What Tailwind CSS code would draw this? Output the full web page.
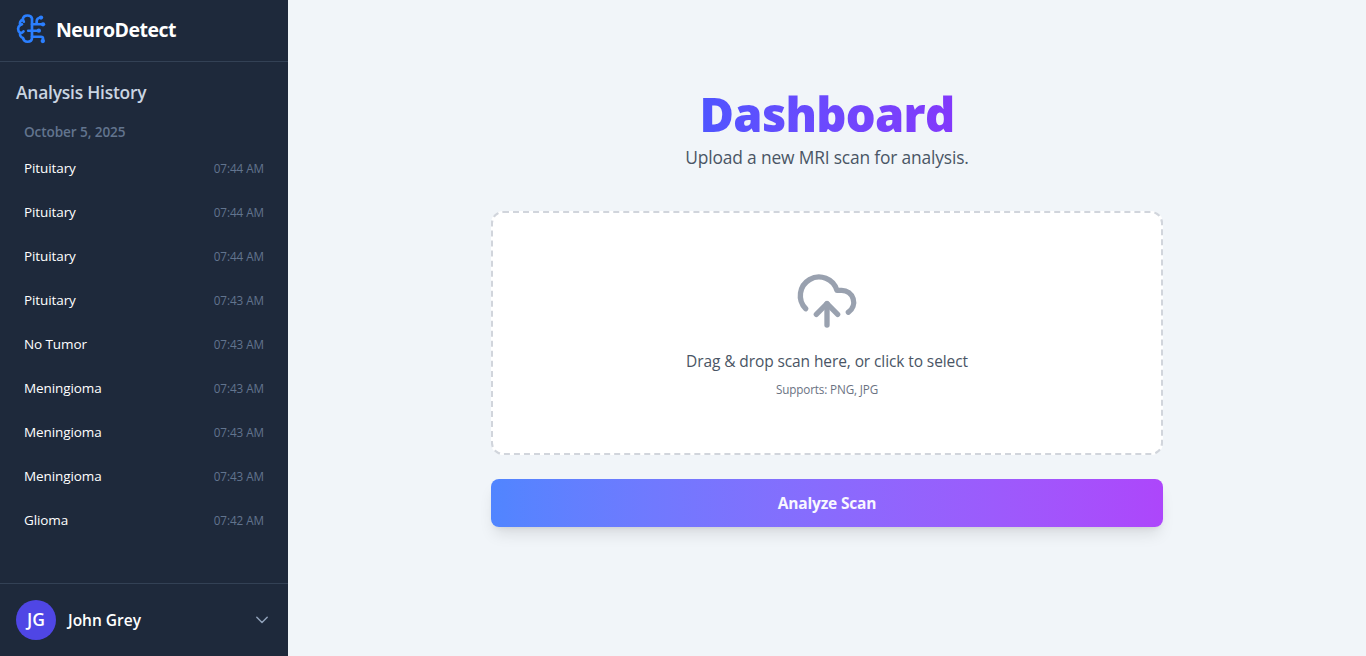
<!DOCTYPE html>
<html lang="en">
<head>
<meta charset="utf-8">
<title>NeuroDetect</title>
<script src="https://cdn.jsdelivr.net/npm/@tailwindcss/browser@4"></script>
</head>
<body class="flex h-screen overflow-hidden bg-[#f1f5f9] font-['Segoe_UI','Open_Sans','Noto_Sans',sans-serif]">
<aside class="flex h-full w-72 shrink-0 flex-col bg-[#1e293b] text-white">
  <header class="flex h-[62px] items-center gap-3 border-b border-[#334155] px-4 pb-0.5">
    <svg class="mb-[3px] h-8 w-7 shrink-0 overflow-visible" viewBox="0 0 28 32" fill="none" stroke="#2b7fff" stroke-width="2.700" stroke-linecap="round" stroke-linejoin="round">
      <g transform="translate(0 .3) scale(1 .96)">
      <path d="M16 6.500C15.500 4.300 13.800 3.300 11.500 3.300C9 3.300 7 5 6.800 7.500C4.300 8.500 3.500 11 4.200 13.200C1.500 15 1.300 19.500 4.200 21.500C3.600 24 5 26.200 7 26.800C7.500 29.500 9.300 30.700 11.500 30.700C14.200 30.700 16 29 16 26.500Z"/>
      <path d="M6.800 7.500L7.800 9.800M4.200 13.200L6 12.500M4.200 21.500Q6.500 21.500 7.500 19.800M16 12.500H27M20.700 12.200V9.500C20.700 7 22.500 5.600 25 5.500M12.200 19.200H23M16 25.500H25Q27 25.500 27 27.500V30"/>
      <g fill="#2b7fff" stroke="none"><circle cx="25" cy="5.500" r="2.200"/><circle cx="27" cy="12.500" r="2.200"/><circle cx="22.800" cy="19.200" r="2.200"/><circle cx="26.800" cy="30" r="2.200"/></g>
      </g>
    </svg>
    <h1 class="text-[19.5px] leading-7 font-bold tracking-[-0.5px]">NeuroDetect</h1>
  </header>
  <section class="flex-1 px-4 pt-4">
    <h2 class="text-[17.4px] leading-7 font-semibold tracking-[-0.21px] text-[#cad5e2]">Analysis History</h2>
    <h3 class="mt-4 px-2 text-[13.6px] leading-5 font-semibold tracking-[-0.1px] text-[#62748e]">October 5, 2025</h3>
    <ul class="mt-1 text-[13.5px] leading-5 [&>li]:flex [&>li]:h-11 [&>li]:items-start [&>li]:justify-between [&>li]:px-2 [&>li]:pt-3 [&_b]:font-medium [&_b]:tracking-[-0.1px] [&_time]:text-[11.7px] [&_time]:tracking-[-0.06px] [&_time]:text-[#62748e]">
      <li><b>Pituitary</b><time>07:44 AM</time></li>
      <li><b>Pituitary</b><time>07:44 AM</time></li>
      <li><b>Pituitary</b><time>07:44 AM</time></li>
      <li><b>Pituitary</b><time>07:43 AM</time></li>
      <li><b>No Tumor</b><time>07:43 AM</time></li>
      <li><b>Meningioma</b><time>07:43 AM</time></li>
      <li><b>Meningioma</b><time>07:43 AM</time></li>
      <li><b>Meningioma</b><time>07:43 AM</time></li>
      <li><b>Glioma</b><time>07:42 AM</time></li>
    </ul>
  </section>
  <footer class="flex h-[73px] items-center border-t border-[#334155] px-4">
    <div class="flex size-10 items-center justify-center rounded-full bg-[#4f46e5] pb-0.5 text-[17.5px] font-semibold">JG</div>
    <span class="ml-3 pt-0.5 text-[15.5px] font-semibold">John Grey</span>
    <svg class="mr-0.5 ml-auto size-4" viewBox="0 0 16 16" fill="none" stroke="#90a1b9" stroke-width="1.500" stroke-linecap="round" stroke-linejoin="round"><path d="M2.800 5.300L8 10.500L13.200 5.300"/></svg>
  </footer>
</aside>
<main class="flex flex-1 flex-col items-center pt-[88px]">
  <h2 class="bg-linear-to-r from-[#4f55ff] to-[#8338fb] bg-clip-text text-[47px] leading-[52px] font-extrabold tracking-[-0.7px] text-transparent">Dashboard</h2>
  <p class="mt-[3px] text-[17.4px] leading-7 tracking-[-0.17px] text-[#4a5565]">Upload a new MRI scan for analysis.</p>
  <div class="mt-10 flex h-[244px] w-[672px] flex-col items-center rounded-xl border-2 border-dashed border-[#d1d5dc] bg-white pt-14">
    <svg class="size-16" viewBox="0 0 24 24" fill="none" stroke="#99a1af" stroke-width="2" stroke-linecap="round" stroke-linejoin="round"><path d="M12 13v8"/><path d="M4 14.899A7 7 0 1 1 15.710 8h1.790a4.500 4.500 0 0 1 2.500 8.242"/><path d="m8 17 4-4 4 4"/></svg>
    <p class="mt-4 text-[15.5px] leading-6 tracking-[-0.1px] text-[#4a5565]">Drag &amp; drop scan here, or click to select</p>
    <p class="mt-2 text-[11.7px] leading-4 tracking-[-0.13px] text-[#6a7282]">Supports: PNG, JPG</p>
  </div>
  <button class="mt-6 h-12 w-[672px] rounded-lg bg-linear-to-r from-[#5085ff] to-[#ad46fb] pt-0.5 text-[15.5px] font-bold tracking-[-0.17px] text-[#f8f7ff] shadow-lg">Analyze Scan</button>
</main>
</body>
</html>
